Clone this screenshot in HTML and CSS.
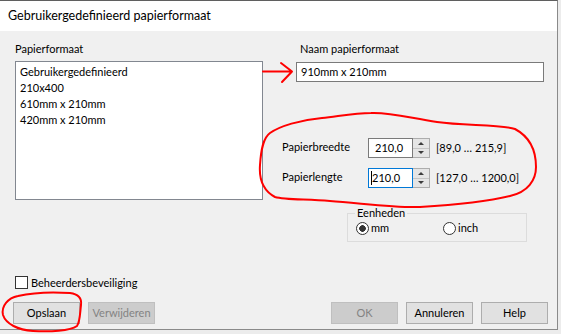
FILE: index.html
```html
<!doctype html>
<html>
 <head>
	<meta charset="UTF-8">
	<title>Gebruikergedefinieerd papierformaat</title>
	<link rel="stylesheet" href="styles.css">
 </head>
 <body>
	<div class="screen">
		<div class="window">
			<div class="titlebar">Gebruikergedefinieerd papierformaat</div>
			<div class="body">
				<div class="main">
					<!-- lijst met formaten -->
					<div class="col-left">
						<div class="label">Papierformaat</div>
						<div class="listbox">
							<div class="item">Gebruikergedefinieerd</div>
							<div class="item">210x400</div>
							<div class="item">610mm x 210mm</div>
							<div class="item">420mm x 210mm</div>
						</div>
					</div>
					<!-- naam, maten en eenheden -->
					<div class="col-right">
						<div class="label name-label">Naam papierformaat</div>
						<div class="textbox">910mm x 210mm</div>
						<div class="dims">
							<div class="dim-row">
								<div class="dim-label">Papierbreedte</div>
								<div class="spin">
									<div class="spin-edit">210,0</div>
									<div class="spin-btns">
										<div class="spin-up"><i class="arrow-up"></i></div>
										<div class="spin-down"><i class="arrow-down"></i></div>
									</div>
								</div>
								<div class="range">[89,0 … 215,9]</div>
							</div>
							<div class="dim-row">
								<div class="dim-label">Papierlengte</div>
								<div class="spin">
									<div class="spin-edit focus"><span class="caret"></span>210,0</div>
									<div class="spin-btns">
										<div class="spin-up"><i class="arrow-up"></i></div>
										<div class="spin-down"><i class="arrow-down"></i></div>
									</div>
								</div>
								<div class="range">[127,0 … 1200,0]</div>
							</div>
						</div>
						<fieldset class="units">
							<legend>Eenheden</legend>
							<div class="radio radio-mm"><span class="radio-circle checked"></span>mm</div>
							<div class="radio"><span class="radio-circle"></span>inch</div>
						</fieldset>
					</div>
				</div>
				<div class="footer">
					<div class="check-row"><span class="checkbox"></span>Beheerdersbeveiliging</div>
					<div class="buttons">
						<div class="btn">Opslaan</div>
						<div class="btn disabled">Verwijderen</div>
						<div class="spacer"></div>
						<div class="btn disabled">OK</div>
						<div class="btn">Annuleren</div>
						<div class="btn">Help</div>
					</div>
				</div>
			</div>
		</div>
		<!-- rode aantekeningen boven op het venster -->
		<svg class="marks" width="561" height="334" viewBox="0 0 561 334">
			<path d="M263 71.5H291M281 63L292 71.5L282 82" />
			<path d="M371 113C390 112 410 118 437 122S500 124 515 129C530 137 536 150 536 167C536 180 528 192 510 196C490 201 455 205 420 207C395 208 360 203 330 201C305 199 285 200 275 197C262 190 259 178 260 165C261 150 263 138 270 133C280 126 300 120 322 118C340 116 355 113 371 113Z" />
			<path d="M70 293C78 294 82 298 81 305C80 313 80 322 77 326C70 331 50 332 33 331C18 330 6 324 3 315C1 306 8 298 18 296C35 292 55 292 70 293" />
		</svg>
	</div>
 </body>
</html>
```

FILE: styles.css
```css
*{box-sizing:border-box}
body{
	margin:0;
	background:#ececec;
	font:11px/16px Lato,"Liberation Sans",sans-serif;
	color:#000;
}
.screen{position:relative;width:561px;height:334px;overflow:hidden}
.window{
	width:558px;height:330px;
	border-top:1px solid #5f5f5f;
	border-right:1px solid #8a8a8a;
	border-bottom:1px solid #8a8a8a;
	background:#f0f0f0;
}
.titlebar{
	height:30px;
	background:#fff;
	padding-left:8px;
	font-size:12.5px;
	line-height:30px;
}
.body{height:298px;display:flex;flex-direction:column}
.main{display:flex;padding:10px 0 0 15px}

/* linker kolom */
.col-left{width:248px}
.label{height:16px;margin-bottom:4px}
.listbox{
	height:139px;
	border:1px solid #828790;
	background:#fff;
	padding:2px 4px;
}

/* rechter kolom */
.col-right{margin-left:19px;width:262px}
.name-label{padding-left:18px;margin-bottom:5px}
.textbox{
	margin-left:14px;
	width:248px;height:20px;
	border:1px solid #7a7a7a;
	background:#fff;
	padding-left:4px;
	line-height:18px;
}
.dims{margin-top:56px;display:flex;flex-direction:column;gap:10px}
.dim-row{display:flex;align-items:center;height:20px}
.dim-label{width:86px;padding-bottom:2px}
.spin{display:flex;width:62px;height:20px}
.spin-edit{
	position:relative;
	width:45px;
	border:1px solid #7a7a7a;
	background:#fff;
	padding-left:6px;
	line-height:18px;
}
.spin-edit.focus{border-color:#0078d7;padding-left:3px}
.caret{
	position:absolute;
	left:2px;top:2px;
	width:1px;height:14px;
	background:#000;
}
.spin-btns{
	width:17px;
	display:flex;flex-direction:column;
	border:1px solid #adadad;
	border-left:0;
}
.spin-up,.spin-down{
	flex:1;
	display:flex;align-items:center;justify-content:center;
	background:#e5e5e5;
}
.spin-down{border-top:1px solid #c4c4c4}
.arrow-up{
	border-left:3px solid transparent;
	border-right:3px solid transparent;
	border-bottom:3px solid #3c3c3c;
}
.arrow-down{
	border-left:3px solid transparent;
	border-right:3px solid transparent;
	border-top:3px solid #3c3c3c;
}
.range{margin-left:6px}

/* eenheden */
.units{
	margin:17px 0 0 65px;
	width:180px;
	border:1px solid #dcdcdc;
	padding:0 0 6px 7px;
	display:flex;
}
.units legend{padding:0 2px;line-height:16px}
.radio{display:flex;align-items:center;height:14px}
.radio-mm{margin-left:1px;width:87px}
.radio-circle{
	width:13px;height:13px;
	border:1px solid #333;
	border-radius:50%;
	background:#fff;
	margin-right:2px;
}
.radio-circle.checked{background:radial-gradient(circle,#333 3px,#fff 3.6px)}

/* onderkant */
.footer{margin-top:auto;padding:0 9px 5px 13px}
.check-row{display:flex;align-items:center;height:13px;margin-left:2px}
.checkbox{
	width:13px;height:13px;
	border:1px solid #333;
	background:#fff;
	margin-right:3px;
}
.buttons{display:flex;gap:8px;margin-top:13px}
.spacer{flex:1}
.btn{
	width:67px;height:22px;
	border:1px solid #adadad;
	background:#e1e1e1;
	display:flex;align-items:center;justify-content:center;
}
.btn.disabled{background:#cccccc;border-color:#bfbfbf;color:#838383}

.marks{
	position:absolute;left:0;top:0;
	fill:none;
	stroke:#ff0000;
	stroke-width:2;
	stroke-linejoin:round;
	stroke-linecap:round;
	pointer-events:none;
}
```
